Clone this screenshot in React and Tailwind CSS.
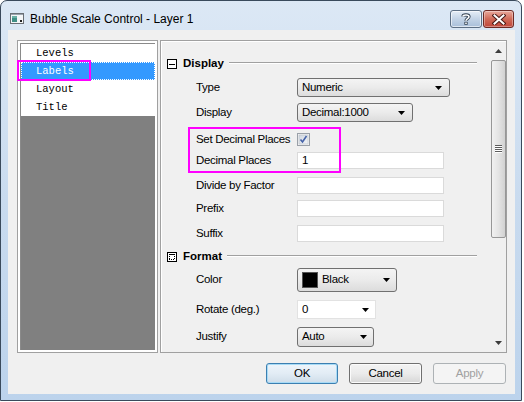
import React from "react";

const UI = "font-['Liberation_Sans',Arial,sans-serif]";
const TXT = "text-[11.5px] tracking-[-0.3px] whitespace-nowrap";

function Tri({ up = false, color = "#000" }) {
  return (
    <svg width="7" height="4" viewBox="0 0 7 4" className="block">
      <path d={up ? "M3.5 0L7 4H0Z" : "M0 0H7L3.5 4Z"} fill={color} />
    </svg>
  );
}

function Combo({ w, h = 19, text, arrowRight = 7 }) {
  return (
    <div
      className={`${w} flex items-center rounded-[3px] border border-[#707070] bg-gradient-to-b from-[#f4f4f4] via-[#ebebeb] to-[#dcdcdc] pl-[4px] ${TXT} text-black`}
      style={{ height: h, paddingRight: arrowRight }}
    >
      <span className="flex-1 leading-none">{text}</span>
      <Tri />
    </div>
  );
}

function Field({ w = "w-[147px]", h = 17, text = "" }) {
  return (
    <div
      className={`${w} flex items-center border border-[#dadada] bg-white pl-[4px] ${TXT} leading-none text-black`}
      style={{ height: h }}
    >
      {text}
    </div>
  );
}

function Row({ label, mt, h, children }) {
  return (
    <div className="flex items-center pl-[35px]" style={{ marginTop: mt, height: h }}>
      <div className={`w-[101px] ${TXT} leading-none text-black`}>{label}</div>
      {children}
    </div>
  );
}

function Header({ mt, icon, text }) {
  return (
    <div className="flex h-[12px] items-center pl-[6px] pr-[14px]" style={{ marginTop: mt }}>
      {icon}
      <span className="ml-[6px] text-[11.5px] font-bold leading-none text-black">{text}</span>
      <div className="ml-[5px] h-[2px] flex-1 -translate-y-[1px] border-t border-b border-t-[#a0a0a0] border-b-white" />
    </div>
  );
}

const MinusIcon = (
  <svg width="10" height="10" viewBox="0 0 10 10" className="block" shapeRendering="crispEdges">
    <rect x="0.5" y="0.5" width="9" height="9" fill="#fff" stroke="#000" />
    <path d="M2 5.5H8" stroke="#000" />
  </svg>
);

const FormatIcon = (
  <svg width="10" height="10" viewBox="0 0 10 10" className="block" shapeRendering="crispEdges">
    <rect x="0.5" y="0.5" width="9" height="9" fill="#fff" stroke="#000" />
    <rect x="2" y="2" width="6" height="1" fill="#000" />
    <path d="M2 4h1M2 6h1M7 4h1M7 6h1M2 7.5h6" stroke="#000" strokeDasharray="1 1" />
  </svg>
);

function TitleIcon() {
  return (
    <svg width="14" height="11" viewBox="0 0 14 11" className="block" shapeRendering="crispEdges">
      <rect x="0.5" y="0.5" width="13" height="10" fill="#f4f6f8" stroke="#6a6f76" />
      <rect x="1" y="1" width="12" height="1" fill="#9aa3ad" />
      <rect x="2" y="3" width="5" height="6" fill="#3f8f86" />
      <rect x="2" y="3" width="5" height="2" fill="#6ab0a6" />
      <rect x="10" y="7" width="2" height="2" fill="#222" />
    </svg>
  );
}

export default function App() {
  return (
    <div className={`h-[402px] w-[524px] bg-white ${UI}`}>
      <div className="flex h-[401px] w-[522px] flex-col rounded-t-[7px] border border-[#3a4a5c] bg-gradient-to-b from-[#dce8f5] via-[#c9dbef] to-[#bcd3ec]">
        {/* Title bar */}
        <div className="flex h-[29px] items-start">
          <div className="ml-[9px] mt-[12px]">
            <TitleIcon />
          </div>
          <div className="ml-[6px] mt-[11px] text-[12px] leading-[14px] text-black">
            Bubble Scale Control - Layer 1
          </div>
          <div className="ml-auto mr-[7px] mt-[9px] flex gap-[1px]">
            <div className="flex h-[18px] w-[32px] items-center justify-center rounded-[3px] border border-[#5d6f84] bg-gradient-to-b from-[#e6eef7] via-[#c3d3e6] to-[#a9bfd9] shadow-[inset_0_0_0_1px_rgba(255,255,255,0.6)]">
              <svg width="10" height="12" viewBox="0 0 10 12">
                <path d="M2 3.5C2 1.5 8 1.2 8 3.8C8 5.5 5 5.8 5 7.8" fill="none" stroke="#2c3a4a" strokeWidth="3.2" />
                <rect x="3.4" y="8.8" width="3.2" height="3" fill="#2c3a4a" />
                <path d="M2 3.5C2 1.5 8 1.2 8 3.8C8 5.5 5 5.8 5 7.8" fill="none" stroke="#fff" strokeWidth="1.6" />
                <rect x="4.2" y="9.5" width="1.6" height="1.6" fill="#fff" />
              </svg>
            </div>
            <div className="flex h-[18px] w-[31px] items-center justify-center rounded-[3px] border border-[#6e2a24] bg-gradient-to-b from-[#e9a99c] via-[#d06a58] to-[#c0463a] shadow-[inset_0_0_0_1px_rgba(255,255,255,0.35)]">
              <svg width="14" height="11" viewBox="0 0 14 11">
                <path d="M2.5 1.5L11.5 9.5M11.5 1.5L2.5 9.5" stroke="#4a1a16" strokeWidth="4" strokeLinecap="square" />
                <path d="M2.5 1.5L11.5 9.5M11.5 1.5L2.5 9.5" stroke="#fff" strokeWidth="2" strokeLinecap="square" />
              </svg>
            </div>
          </div>
        </div>

        {/* Client area */}
        <div className="relative ml-[7px] mr-[6px] h-[364px] bg-[#f0f0f0] pl-[9px] pr-[8px] pt-[10px]">
          <div className="flex h-[313px] gap-[2px]">
            {/* Left list */}
            <div className="w-[141px] border border-[#a0a0a0] bg-white p-[2px]">
              <div className="flex h-full flex-col border-l border-t border-[#8a8a8a] font-['Liberation_Mono',monospace] text-[10.5px] leading-none">
                <div className="flex h-[18px] shrink-0 items-center pl-[15px] pt-[1px] text-black">Levels</div>
                <div className="flex h-[18px] shrink-0 items-center border border-dotted border-white bg-[#3399ff] pl-[14px] pt-[1px] text-white">
                  Labels
                </div>
                <div className="flex h-[18px] shrink-0 items-center pl-[15px] pt-[1px] text-black">Layout</div>
                <div className="flex h-[18px] shrink-0 items-center pl-[15px] pt-[1px] text-black">Title</div>
                <div className="flex-1 bg-[#808080]" />
              </div>
            </div>

            {/* Right property panel */}
            <div className="flex w-[347px] border border-[#a0a0a0] shadow-[inset_1px_1px_0_#ffffff]">
              <div className="flex-1">
                <Header mt={17} icon={MinusIcon} text="Display" />
                <Row label="Type" mt={8} h={19}>
                  <Combo w="w-[153px]" text="Numeric" arrowRight={7} />
                </Row>
                <Row label="Display" mt={6} h={19}>
                  <Combo w="w-[116px]" text="Decimal:1000" arrowRight={7} />
                </Row>
                <Row label="Set Decimal Places" mt={11} h={13}>
                  <div className="h-[13px] w-[13px]">
                    <svg width="13" height="13" viewBox="0 0 13 13" className="block">
                      <defs>
                        <linearGradient id="cbg" x1="0" y1="0" x2="1" y2="1">
                          <stop offset="0" stopColor="#cfd6df" />
                          <stop offset="1" stopColor="#f2f4f7" />
                        </linearGradient>
                      </defs>
                      <rect x="0.5" y="0.5" width="12" height="12" fill="#f4f4f4" stroke="#9aa0a8" />
                      <rect x="2" y="2" width="9" height="9" fill="url(#cbg)" stroke="#b7bec8" strokeWidth="0.6" />
                      <path d="M3.5 6.5L5.5 9L9.5 3" fill="none" stroke="#4562a8" strokeWidth="1.6" />
                    </svg>
                  </div>
                </Row>
                <Row label="Decimal Places" mt={6} h={17}>
                  <Field text="1" />
                </Row>
                <Row label="Divide by Factor" mt={8} h={17}>
                  <Field />
                </Row>
                <Row label="Prefix" mt={6} h={17}>
                  <Field />
                </Row>
                <Row label="Suffix" mt={8} h={17}>
                  <Field />
                </Row>
                <Header mt={9} icon={FormatIcon} text="Format" />
                <Row label="Color" mt={5} h={24}>
                  <div className={`flex h-[24px] w-[100px] items-center rounded-[3px] border border-[#707070] bg-gradient-to-b from-[#f4f4f4] via-[#ebebeb] to-[#dcdcdc] pl-[4px] pr-[6px] ${TXT} leading-none text-black`}>
                    <div className="h-[16px] w-[16px] border border-[#555] bg-black" />
                    <span className="ml-[4px] flex-1">Black</span>
                    <Tri />
                  </div>
                </Row>
                <Row label="Rotate (deg.)" mt={8} h={19}>
                  <div className={`flex h-[19px] w-[79px] items-center border border-[#e2e2e2] bg-white pl-[4px] pr-[6px] ${TXT} leading-none text-black`}>
                    <span className="flex-1">0</span>
                    <Tri />
                  </div>
                </Row>
                <Row label="Justify" mt={8} h={20}>
                  <Combo w="w-[77px]" h={20} text="Auto" arrowRight={6} />
                </Row>
              </div>

              {/* Scrollbar */}
              <div className="flex w-[15px] flex-col">
                <div className="flex h-[17px] items-center justify-center pt-[2px]">
                  <Tri up color="#3c3c3c" />
                </div>
                <div className="mt-[2px] flex h-[178px] items-center justify-center rounded-[2px] border border-[#979797] bg-gradient-to-r from-[#f1f1f1] via-[#e4e4e4] to-[#d2d2d2]">
                  <svg width="7" height="8" viewBox="0 0 7 8" className="block" shapeRendering="crispEdges">
                    <path d="M0 0.5h7M0 2.5h7M0 4.5h7M0 6.5h7" stroke="#5c5c5c" />
                    <path d="M0 1.5h7M0 3.5h7M0 5.5h7M0 7.5h7" stroke="#ffffff" />
                  </svg>
                </div>
                <div className="flex-1" />
                <div className="flex h-[17px] items-center justify-center pb-[1px]">
                  <Tri color="#3c3c3c" />
                </div>
              </div>
            </div>
          </div>

          {/* Buttons */}
          <div className={`mt-[10px] flex justify-end pr-[1px] ${TXT} leading-none`}>
            <div className="flex h-[21px] w-[72px] items-center justify-center rounded-[3px] border border-[#3c7fb1] bg-gradient-to-b from-[#eef5fb] via-[#e2ecf5] to-[#cfdde9] text-black shadow-[inset_0_0_0_1px_#a8dbf6]">
              OK
            </div>
            <div className="ml-[11px] flex h-[21px] w-[73px] items-center justify-center rounded-[3px] border border-[#707070] bg-gradient-to-b from-[#f3f3f3] via-[#ebebeb] to-[#d6d6d6] text-black shadow-[inset_0_0_0_1px_#fbfbfb]">
              Cancel
            </div>
            <div className="ml-[11px] flex h-[21px] w-[73px] items-center justify-center rounded-[3px] border border-[#adb2b5] bg-[#f4f4f4] text-[#a0a0a0]">
              Apply
            </div>
          </div>

          {/* Highlight overlays */}
          <div className="pointer-events-none absolute left-[9px] top-[30px] h-[21px] w-[74px] border-2 border-[#ff00ff]" />
          <div className="pointer-events-none absolute left-[180px] top-[97px] h-[46px] w-[153px] border-2 border-[#ff00ff]" />
        </div>
      </div>
    </div>
  );
}
